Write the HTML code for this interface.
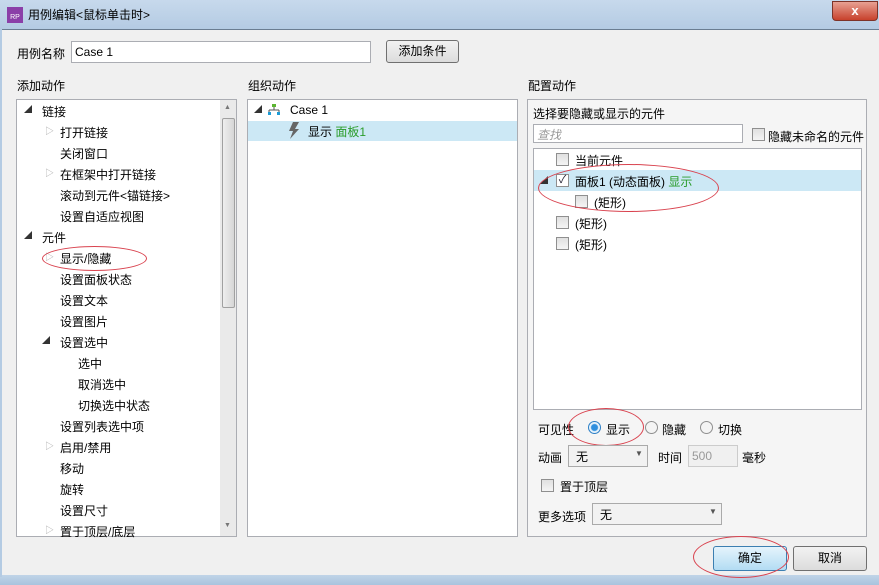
<!DOCTYPE html>
<html><head><meta charset="utf-8"><style>
*{margin:0;padding:0;box-sizing:border-box}
body{width:879px;height:585px;overflow:hidden;background:#f0f0f0;font-family:"Liberation Sans","Noto Sans CJK SC",sans-serif;font-size:12px;color:#000;position:relative}
.a{position:absolute;white-space:nowrap}
.box{position:absolute;background:#fff;border:1px solid #abadb3}
.cb{position:absolute;width:13px;height:13px;border:1px solid #8f8f8f;background:linear-gradient(#e0e0e0,#f4f4f4)}
.tri{position:absolute;width:0;height:0}
.row{position:absolute;left:0;right:0;height:20px}
.rad{position:absolute;width:13px;height:13px;border-radius:50%;border:1px solid #8f8f8f;background:#f4f4f4}
.btn{position:absolute;height:25px;border:1px solid #707070;border-radius:3px;background:linear-gradient(#f2f2f2,#dcdcdc);text-align:center;line-height:23px}
</style></head><body>
<div class="a" style="left:0;top:0;width:879px;height:29px;background:linear-gradient(#c7d9ec,#b4cbe3)"></div>
<div class="a" style="left:7px;top:7px;width:16px;height:16px;background:#8b3fa8;color:#fff;font-size:7px;line-height:22px;text-align:center">RP</div>
<div class="a" style="left:28px;top:6px;font-size:12px">用例编辑&lt;鼠标单击时&gt;</div>
<div class="a" style="left:832px;top:1px;width:46px;height:20px;border:1px solid #7d3328;border-radius:0 0 4px 4px;background:linear-gradient(#e8a193,#c7412c);color:#fff;font-weight:bold;text-align:center;line-height:18px;font-size:13px">x</div>
<div class="a" style="left:0;top:29px;width:879px;height:1px;background:#6a7d91"></div>
<div class="a" style="left:0;top:575px;width:879px;height:10px;background:linear-gradient(#c0d4e8,#a9c3de)"></div>
<div class="a" style="left:0;top:29px;width:2px;height:548px;background:#b4cbe3"></div>

<div class="a" style="left:17px;top:45px">用例名称</div>
<div class="box" style="left:71px;top:41px;width:300px;height:22px"><span class="a" style="left:3px;top:3px">Case 1</span></div>
<div class="btn" style="left:386px;top:40px;width:73px;height:23px;line-height:21px">添加条件</div>

<div class="a" style="left:17px;top:77px">添加动作</div>
<div class="a" style="left:248px;top:77px">组织动作</div>
<div class="a" style="left:528px;top:77px">配置动作</div>

<div class="box" style="left:16px;top:99px;width:221px;height:438px;overflow:hidden">
<div class="a" style="left:203px;top:0;width:17px;height:436px;background:#eaeaea"></div>
<div class="a" style="left:205px;top:18px;width:13px;height:190px;background:linear-gradient(90deg,#eee,#d6d6d6);border:1px solid #a0a0a0;border-radius:2px"></div>
<div class="a" style="left:207px;top:4px;font-size:7px;color:#777">▲</div>
<div class="a" style="left:207px;top:422px;font-size:7px;color:#777">▼</div>
</div>
<div style="position:absolute;left:0;top:0">
<div class="a" style="left:24px;top:104px;font-size:8px;color:#333">◢</div><div class="a" style="left:42px;top:103px">链接</div>
<div class="a" style="left:45px;top:124px;font-size:9px;color:#aaa">▷</div><div class="a" style="left:60px;top:124px">打开链接</div>
<div class="a" style="left:60px;top:145px">关闭窗口</div>
<div class="a" style="left:45px;top:166px;font-size:9px;color:#aaa">▷</div><div class="a" style="left:60px;top:166px">在框架中打开链接</div>
<div class="a" style="left:60px;top:187px">滚动到元件&lt;锚链接&gt;</div>
<div class="a" style="left:60px;top:208px">设置自适应视图</div>
<div class="a" style="left:24px;top:230px;font-size:8px;color:#333">◢</div><div class="a" style="left:42px;top:229px">元件</div>
<div class="a" style="left:45px;top:250px;font-size:9px;color:#aaa">▷</div><div class="a" style="left:60px;top:250px">显示/隐藏</div>
<div class="a" style="left:60px;top:271px">设置面板状态</div>
<div class="a" style="left:60px;top:292px">设置文本</div>
<div class="a" style="left:60px;top:313px">设置图片</div>
<div class="a" style="left:42px;top:335px;font-size:8px;color:#333">◢</div><div class="a" style="left:60px;top:334px">设置选中</div>
<div class="a" style="left:78px;top:355px">选中</div>
<div class="a" style="left:78px;top:376px">取消选中</div>
<div class="a" style="left:78px;top:397px">切换选中状态</div>
<div class="a" style="left:60px;top:418px">设置列表选中项</div>
<div class="a" style="left:45px;top:439px;font-size:9px;color:#aaa">▷</div><div class="a" style="left:60px;top:439px">启用/禁用</div>
<div class="a" style="left:60px;top:460px">移动</div>
<div class="a" style="left:60px;top:481px">旋转</div>
<div class="a" style="left:60px;top:502px">设置尺寸</div>
<div class="a" style="left:45px;top:523px;font-size:9px;color:#aaa">▷</div><div class="a" style="left:60px;top:523px">置于顶层/底层</div>
</div>
<div class="a" style="left:42px;top:246px;width:105px;height:25px;border:1px solid #d9434f;border-radius:50%"></div>

<div class="box" style="left:247px;top:99px;width:271px;height:438px"></div>
<div class="a" style="left:248px;top:121px;width:269px;height:20px;background:#cce8f5"></div>
<div class="a" style="left:254px;top:104px;font-size:8px;color:#333">◢</div>
<svg class="a" style="left:268px;top:104px" width="12" height="11"><rect x="4" y="0" width="4" height="3" fill="#5cb531"/><path d="M6 3v3M1 6h10M1 6v2M11 6v2" stroke="#555" fill="none"/><rect x="0" y="8" width="3" height="3" fill="#1c9bd6"/><rect x="9" y="8" width="3" height="3" fill="#1c9bd6"/></svg>
<div class="a" style="left:290px;top:103px">Case 1</div>
<svg class="a" style="left:288px;top:122px" width="12" height="17"><path d="M5 0h6l-4 7h4l-9 10 3-8H1z" fill="#666"/></svg>
<div class="a" style="left:308px;top:123px">显示 <span style="color:#2a9c2a">面板1</span></div>

<div class="box" style="left:527px;top:99px;width:340px;height:438px;background:#f5f5f5"></div>
<div class="a" style="left:533px;top:105px">选择要隐藏或显示的元件</div>
<div class="box" style="left:533px;top:124px;width:210px;height:19px"><span class="a" style="left:3px;top:1px;color:#999;font-style:italic">查找</span></div>
<div class="cb" style="left:752px;top:128px"></div>
<div class="a" style="left:768px;top:128px">隐藏未命名的元件</div>
<div class="box" style="left:533px;top:148px;width:329px;height:262px"></div>
<div class="a" style="left:534px;top:170px;width:327px;height:21px;background:#cce8f5"></div>
<div class="cb" style="left:556px;top:153px"></div><div class="a" style="left:575px;top:152px">当前元件</div>
<div class="a" style="left:540px;top:175px;font-size:8px;color:#333">◢</div>
<div class="cb" style="left:556px;top:174px;background:#fff;font-size:11px;line-height:10px;text-align:center;color:#223">✓</div><div class="a" style="left:575px;top:173px">面板1 (动态面板) <span style="color:#2a9c2a">显示</span></div>
<div class="cb" style="left:575px;top:195px"></div><div class="a" style="left:594px;top:194px">(矩形)</div>
<div class="cb" style="left:556px;top:216px"></div><div class="a" style="left:575px;top:215px">(矩形)</div>
<div class="cb" style="left:556px;top:237px"></div><div class="a" style="left:575px;top:236px">(矩形)</div>
<div class="a" style="left:538px;top:164px;width:181px;height:48px;border:1px solid #d9434f;border-radius:50%"></div>

<div class="a" style="left:538px;top:421px">可见性</div>
<div class="rad" style="left:588px;top:421px;border-color:#2c7fc6;background:radial-gradient(circle,#2f8fde 3px,#e6f2fb 4px)"></div><div class="a" style="left:606px;top:421px">显示</div>
<div class="rad" style="left:645px;top:421px"></div><div class="a" style="left:662px;top:421px">隐藏</div>
<div class="rad" style="left:700px;top:421px"></div><div class="a" style="left:718px;top:421px">切换</div>
<div class="a" style="left:568px;top:408px;width:76px;height:38px;border:1px solid #d9434f;border-radius:50%"></div>
<div class="a" style="left:538px;top:449px">动画</div>
<div class="box" style="left:568px;top:445px;width:80px;height:22px;background:#f2f2f2;border-color:#aaa"><span class="a" style="left:7px;top:2px">无</span><span class="a" style="left:66px;top:3px;font-size:8px;color:#555">▼</span></div>
<div class="a" style="left:658px;top:449px">时间</div>
<div class="box" style="left:688px;top:445px;width:50px;height:22px;background:#f0f0f0;border-color:#ccc"><span class="a" style="left:3px;top:3px;color:#999">500</span></div>
<div class="a" style="left:742px;top:449px">毫秒</div>
<div class="cb" style="left:541px;top:479px"></div><div class="a" style="left:560px;top:478px">置于顶层</div>
<div class="a" style="left:538px;top:508px">更多选项</div>
<div class="box" style="left:592px;top:503px;width:130px;height:22px;background:#f2f2f2;border-color:#aaa"><span class="a" style="left:7px;top:2px">无</span><span class="a" style="left:116px;top:3px;font-size:8px;color:#555">▼</span></div>

<div class="btn" style="left:713px;top:546px;width:74px;border-color:#3c7fb1;background:linear-gradient(#e5f4fc,#b3dcf3)">确定</div>
<div class="btn" style="left:793px;top:546px;width:74px">取消</div>
<div class="a" style="left:693px;top:536px;width:96px;height:42px;border:1px solid #d9434f;border-radius:50%"></div>
</body></html>
